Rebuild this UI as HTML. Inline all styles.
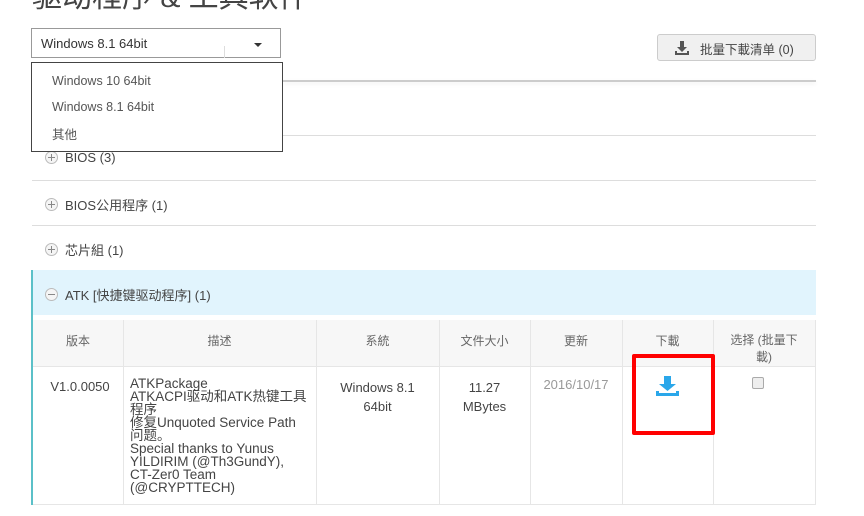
<!DOCTYPE html>
<html><head><meta charset="utf-8"><style>
*{margin:0;padding:0;box-sizing:border-box}
body{width:864px;height:516px;background:#fff;position:relative;overflow:hidden;font-family:"Liberation Sans","Noto Sans CJK SC",sans-serif;color:#444}
.a{position:absolute}
.title{left:32px;top:-28px;font-size:30px;color:#444;white-space:nowrap}
.sel{left:31px;top:28px;width:250px;height:30px;border:1px solid #999;font-size:13px;color:#333;padding:7px 0 0 9px}
.menu{left:31px;top:62px;width:252px;height:90px;border:1px solid #444;background:#fff;font-size:12.5px;color:#555;z-index:2}
.menu div{position:absolute;left:20px}
.btn{left:657px;top:34px;width:159px;height:27px;background:#f0f0f0;border:1px solid #ccc;border-radius:3px;font-size:12.5px;color:#444;padding:4px 0 0 42px}
.hl{background:#ddd;height:1px}
.row{left:45px;font-size:13px;color:#444;display:flex;align-items:center}
.pl{width:13px;height:13px;border:1px solid #bbb;border-radius:50%;margin-right:7px;position:relative;background:#f5f5f5}
.pl:before{content:"";position:absolute;left:2px;top:5px;width:7px;height:1px;background:#888}
.pl.p:after{content:"";position:absolute;left:5px;top:2px;width:1px;height:7px;background:#888}
.vl{position:absolute;width:1px;background:#e6e6e6}
.c{position:absolute;font-size:13px;text-align:center}
</style></head><body>
<div class="a title">驱动程序 &amp; 工具软件</div>
<div class="a sel">Windows 8.1 64bit</div>
<div class="a" style="left:224px;top:46px;width:1px;height:12px;background:#ddd"></div>
<div class="a" style="left:254px;top:43px;border-left:4px solid transparent;border-right:4px solid transparent;border-top:4px solid #333"></div>
<div class="a menu"><div style="top:11px">Windows 10 64bit</div><div style="top:37px">Windows 8.1 64bit</div><div style="top:61px">其他</div></div>
<div class="a btn">批量下載清单 (0)</div>
<svg class="a" style="left:674px;top:40px" width="16" height="16" viewBox="0 0 16 16"><path d="M6 1h4v6h3l-5 5-5-5h3z" fill="#555"/><path d="M1 11v4h14v-4h-2v2H3v-2z" fill="#555"/></svg>
<div class="a" style="left:283px;top:80px;width:533px;height:2px;background:#ccc;box-shadow:0 2px 4px #eee"></div>
<div class="a hl" style="left:32px;top:135px;width:784px"></div>
<div class="a hl" style="left:32px;top:180px;width:784px"></div>
<div class="a hl" style="left:32px;top:225px;width:784px"></div>
<div class="a row" style="top:150px"><span class="pl p"></span>BIOS (3)</div>
<div class="a row" style="top:195px"><span class="pl p"></span>BIOS公用程序 (1)</div>
<div class="a row" style="top:240px"><span class="pl p"></span>芯片組 (1)</div>
<div class="a" style="left:31px;top:270px;width:785px;height:45px;background:#e1f4fd"></div>
<div class="a" style="left:31px;top:270px;width:2px;height:235px;background:#5bc0c8"></div>
<div class="a row" style="top:285px"><span class="pl"></span>ATK [快捷键驱动程序] (1)</div>
<div class="a" style="left:33px;top:320px;width:783px;height:46px;background:#f7f7f7"></div>
<div class="a hl" style="left:33px;top:366px;width:783px;background:#e6e6e6"></div>
<div class="a hl" style="left:33px;top:504px;width:783px;background:#e6e6e6"></div>
<div class="vl" style="left:123px;top:320px;height:185px"></div>
<div class="vl" style="left:316px;top:320px;height:185px"></div>
<div class="vl" style="left:439px;top:320px;height:185px"></div>
<div class="vl" style="left:530px;top:320px;height:185px"></div>
<div class="vl" style="left:622px;top:320px;height:185px"></div>
<div class="vl" style="left:713px;top:320px;height:185px"></div>
<div class="vl" style="left:815px;top:320px;height:185px"></div>
<div class="c" style="left:33px;width:90px;top:332px;font-size:12px;color:#666">版本</div>
<div class="c" style="left:123px;width:193px;top:332px;font-size:12px;color:#666">描述</div>
<div class="c" style="left:316px;width:123px;top:332px;font-size:12px;color:#666">系統</div>
<div class="c" style="left:439px;width:91px;top:332px;font-size:12px;color:#666">文件大小</div>
<div class="c" style="left:530px;width:92px;top:332px;font-size:12px;color:#666">更新</div>
<div class="c" style="left:622px;width:91px;top:332px;font-size:12px;color:#666">下載</div>
<div class="c" style="left:713px;width:102px;top:332px;font-size:12px;color:#666;line-height:17px">选择 (批量下<br>載)</div>
<div class="c" style="left:33px;width:94px;top:379px">V1.0.0050</div>
<div class="a" style="left:130px;top:377px;width:190px;font-size:13.5px;line-height:13px;color:#444;white-space:nowrap">ATKPackage<br>ATKACPI驱动和ATK热键工具<br>程序<br>修复Unquoted Service Path<br>问题。<br>Special thanks to Yunus<br>YILDIRIM (@Th3GundY),<br>CT-Zer0 Team<br>(@CRYPTTECH)</div>
<div class="c" style="left:316px;width:123px;top:378px;line-height:19px">Windows 8.1<br>64bit</div>
<div class="c" style="left:439px;width:91px;top:378px;line-height:19px">11.27<br>MBytes</div>
<div class="c" style="left:530px;width:92px;top:377px;color:#999">2016/10/17</div>
<svg class="a" style="left:656px;top:376px" width="23" height="21" viewBox="0 0 23 21"><path d="M8 0h7v8h5l-8.5 7L3 8h5z" fill="#2aa7ea"/><path d="M0 15h3v2h17v-2h3v5H0z" fill="#2aa7ea"/></svg>
<div class="a" style="left:752px;top:377px;width:12px;height:12px;border:1px solid #aaa;border-radius:2px;background:#eee"></div>
<div class="a" style="left:632px;top:354px;width:83px;height:81px;border:4px solid #f00;border-radius:2px"></div>
</body></html>
